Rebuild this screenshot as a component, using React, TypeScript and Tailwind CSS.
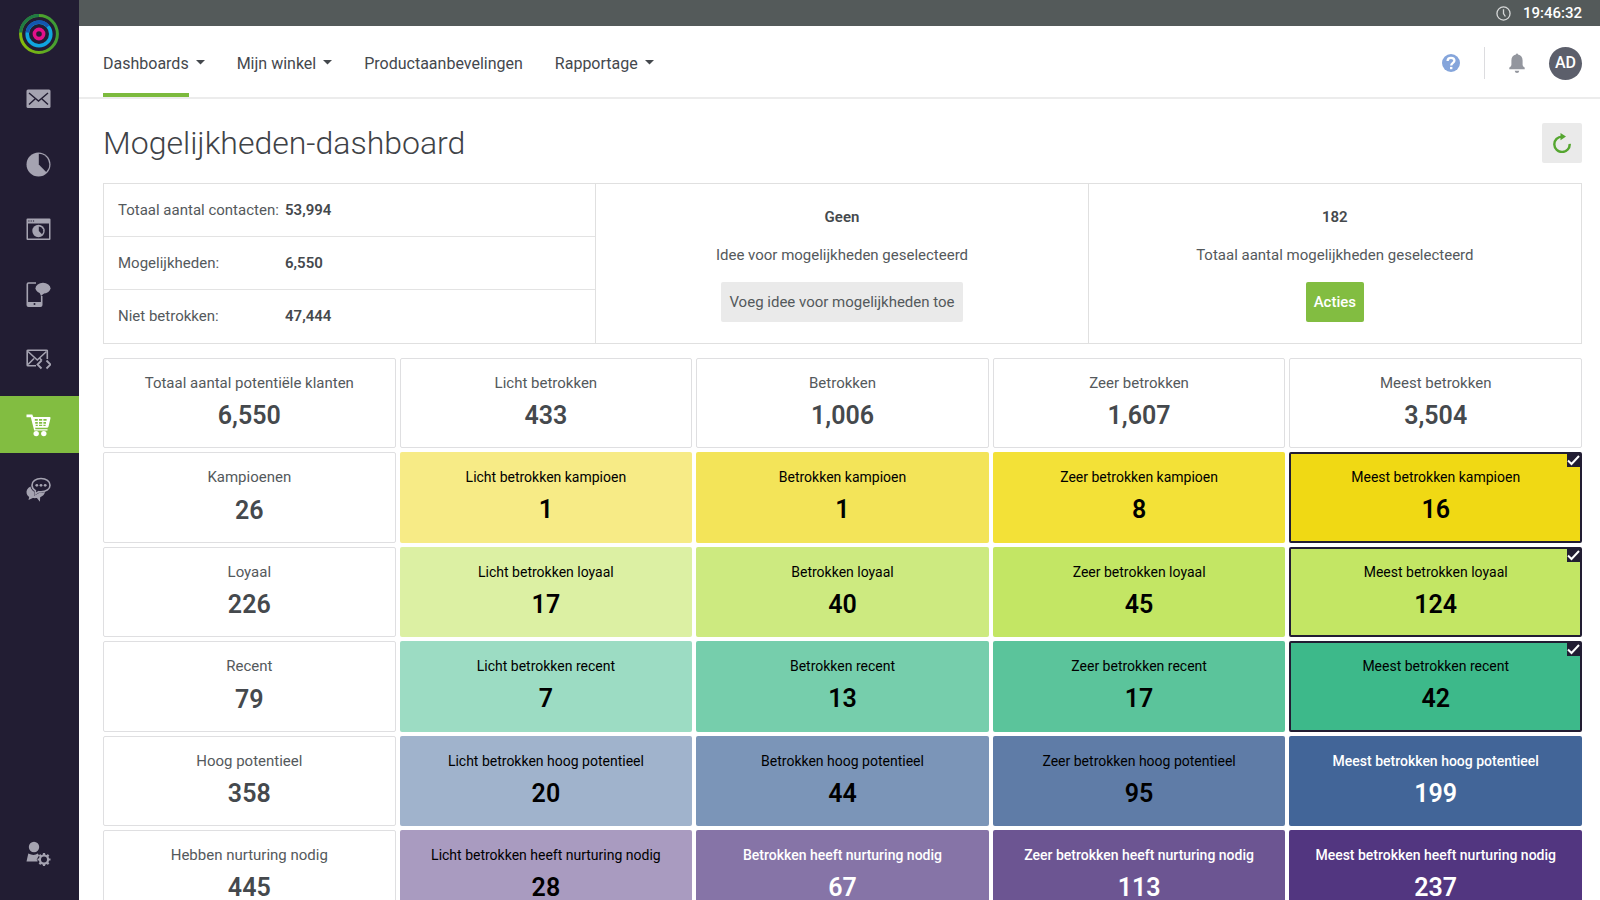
import { useState, type ReactNode } from 'react';

const navItems = [
  { label: 'Dashboards', menu: true, active: true },
  { label: 'Mijn winkel', menu: true, active: false },
  { label: 'Productaanbevelingen', menu: false, active: false },
  { label: 'Rapportage', menu: true, active: false },
];

const contacts = [
  { label: 'Totaal aantal contacten:', value: '53,994' },
  { label: 'Mogelijkheden:', value: '6,550' },
  { label: 'Niet betrokken:', value: '47,444' },
];

const totals = [
  { label: 'Totaal aantal potentiële klanten', value: '6,550' },
  { label: 'Licht betrokken', value: '433' },
  { label: 'Betrokken', value: '1,006' },
  { label: 'Zeer betrokken', value: '1,607' },
  { label: 'Meest betrokken', value: '3,504' },
];

const segments = [
  {
    label: 'Kampioenen',
    value: '26',
    cells: [
      { label: 'Licht betrokken kampioen', value: '1', color: 'bg-[#f7eb86] text-black' },
      { label: 'Betrokken kampioen', value: '1', color: 'bg-[#f3e459] text-black' },
      { label: 'Zeer betrokken kampioen', value: '8', color: 'bg-[#f3e137] text-black' },
      { label: 'Meest betrokken kampioen', value: '16', color: 'bg-[#f0d914] text-black' },
    ],
  },
  {
    label: 'Loyaal',
    value: '226',
    cells: [
      { label: 'Licht betrokken loyaal', value: '17', color: 'bg-[#dcf0a3] text-black' },
      { label: 'Betrokken loyaal', value: '40', color: 'bg-[#cdea80] text-black' },
      { label: 'Zeer betrokken loyaal', value: '45', color: 'bg-[#c3e664] text-black' },
      { label: 'Meest betrokken loyaal', value: '124', color: 'bg-[#c3e664] text-black' },
    ],
  },
  {
    label: 'Recent',
    value: '79',
    cells: [
      { label: 'Licht betrokken recent', value: '7', color: 'bg-[#9cdcc3] text-black' },
      { label: 'Betrokken recent', value: '13', color: 'bg-[#76ceac] text-black' },
      { label: 'Zeer betrokken recent', value: '17', color: 'bg-[#5bc49b] text-black' },
      { label: 'Meest betrokken recent', value: '42', color: 'bg-[#3db98a] text-black' },
    ],
  },
  {
    label: 'Hoog potentieel',
    value: '358',
    cells: [
      { label: 'Licht betrokken hoog potentieel', value: '20', color: 'bg-[#a0b3cc] text-black' },
      { label: 'Betrokken hoog potentieel', value: '44', color: 'bg-[#7b95b8] text-black' },
      { label: 'Zeer betrokken hoog potentieel', value: '95', color: 'bg-[#5f7ca7] text-black' },
      { label: 'Meest betrokken hoog potentieel', value: '199', color: 'bg-[#426598] text-white font-medium' },
    ],
  },
  {
    label: 'Hebben nurturing nodig',
    value: '445',
    cells: [
      { label: 'Licht betrokken heeft nurturing nodig', value: '28', color: 'bg-[#a99bc0] text-black' },
      { label: 'Betrokken heeft nurturing nodig', value: '67', color: 'bg-[#8674a7] text-white font-medium' },
      { label: 'Zeer betrokken heeft nurturing nodig', value: '113', color: 'bg-[#6c5592] text-white font-medium' },
      { label: 'Meest betrokken heeft nurturing nodig', value: '237', color: 'bg-[#523680] text-white font-medium' },
    ],
  },
];

function Icon({ children }: { children: ReactNode }) {
  return (
    <svg viewBox="0 0 25 25" className="size-[25px]" fill="none" aria-hidden="true">
      {children}
    </svg>
  );
}

function Logo() {
  return (
    <svg viewBox="0 0 40 40" className="size-10" fill="none" aria-hidden="true">
      <defs>
        <linearGradient id="ring-green" x1="0" y1="0.6" x2="0.9" y2="0.3">
          <stop offset="0" stopColor="#86bc0c" />
          <stop offset="1" stopColor="#3f9c35" />
        </linearGradient>
      </defs>
      <circle cx="20" cy="20" r="18.4" stroke="url(#ring-green)" strokeWidth="3" />
      <path d="M1.6 18.5A18.4 18.4 0 0 1 20 1.6" stroke="#1f7a45" strokeWidth="3" />
      <circle cx="20" cy="20" r="11.8" stroke="#0fa6df" strokeWidth="3.6" />
      <path d="M8.3 18.5A11.8 11.8 0 0 1 29 12.3" stroke="#1456b0" strokeWidth="3.6" />
      <circle cx="20" cy="20" r="4.6" stroke="#e3108a" strokeWidth="3.6" />
    </svg>
  );
}

const sidebarItems = [
  {
    name: 'E-mail',
    icon: (
      <Icon>
        <rect x="0.5" y="2.5" width="24" height="18.5" rx="1.5" fill="currentColor" />
        <path d="M3 6 12.500 14 22 6M3 17.500l6-5.500M22 17.500l-6-5.500" stroke="#221d33" strokeWidth="1.4" />
      </Icon>
    ),
  },
  {
    name: 'Analyse',
    icon: (
      <Icon>
        <circle cx="12.5" cy="12.5" r="12" fill="currentColor" />
        <path d="M12.8 1.8A10.8 10.8 0 0 1 20.2 20L12.8 12.5Z" fill="#221d33" />
      </Icon>
    ),
  },
  {
    name: 'Webkanaal',
    icon: (
      <Icon>
        <path d="M.5 2.500a1 1 0 0 1 1-1h22a1 1 0 0 1 1 1V22a1 1 0 0 1-1 1h-22a1 1 0 0 1-1-1Z" fill="currentColor" />
        <path d="M2 6.500h21v15H2Z" fill="#221d33" />
        <path d="M2.300 3.400h1.200v1.200H2.300ZM4.600 3.400h1.200v1.200H4.600ZM6.900 3.400h1.200v1.200H6.900Z" fill="#221d33" />
        <circle cx="12.5" cy="14" r="6.2" fill="currentColor" />
        <path d="M12.800 9.500A4.600 4.600 0 0 1 16 17.300L12.800 14Z" fill="#221d33" />
      </Icon>
    ),
  },
  {
    name: 'Mobiel',
    icon: (
      <Icon>
        <path d="M10 1H2.500A1.200 1.200 0 0 0 1.300 2.200V23a1.200 1.200 0 0 0 1.200 1.200h12A1.200 1.200 0 0 0 15.700 23v-9" stroke="currentColor" strokeWidth="1.6" />
        <path d="M1.500 20h14v4h-14Z" fill="currentColor" />
        <circle cx="8.5" cy="22" r="1" fill="#221d33" />
        <ellipse cx="17" cy="6.2" rx="7.5" ry="5.4" fill="currentColor" />
        <path d="M13.500 10.500 15 14l4-3.500Z" fill="currentColor" />
      </Icon>
    ),
  },
  {
    name: 'Transactionele e-mail',
    icon: (
      <Icon>
        <path d="M10 18.700H2a.8.8 0 0 1-.8-.8V4a.8.8 0 0 1 .8-.8h18.500a.8.8 0 0 1 .8.8v8" stroke="currentColor" strokeWidth="1.6" />
        <path d="m2 4.500 9.300 8.500L20.500 4.500M2 17.500l6-6M14 11.500l2 2" stroke="currentColor" strokeWidth="1.6" />
        <path d="m15.500 13.500-4 4 4 4M20.500 13.500l4 4-4 4" stroke="currentColor" strokeWidth="1.8" />
      </Icon>
    ),
  },
  {
    name: 'Winkel',
    active: true,
    icon: (
      <Icon>
        <path d="M.5 2.500h5.800l1 2.500h16.200q1.300 0 1 1.200l-2 8.300q-.3 1.200-1.500 1.200H9l.5 1.600h12v1.300H8.200L4.800 5.300H.5Z" fill="currentColor" />
        <path
          d="M8.800 7h3v1.800h-3ZM13 7h3.200v1.800H13ZM17.400 7h3.200v1.800h-3.200ZM9.200 9.900h2.600v1.800H9.200ZM13 9.900h3.200v1.800H13ZM17.400 9.900H20v1.800h-2.600ZM9.700 12.800h2.100v1.300H9.700ZM13 12.800h3.200v1.300H13ZM17.400 12.800h2.200v1.300h-2.200Z"
          fill="#82bd41"
        />
        <circle cx="10.2" cy="21.6" r="2.7" fill="currentColor" />
        <circle cx="17.8" cy="21.6" r="2.7" fill="currentColor" />
      </Icon>
    ),
  },
  {
    name: 'Conversaties',
    icon: (
      <Icon>
        <path d="M4.500 9.500C1.500 11 0 13.500.6 16.200c.4 1.700 1.400 2.900 2.600 3.700L2.500 23l4.300-1.900c1.300.2 2.800.2 4.100 0l3 3.700.3-4.500c2.500-.9 4.300-2.800 4.800-5.200-2 .8-4 1-6 .9l-5 2.700.2-4C6.200 13.600 5 11.800 4.500 9.500Z" fill="currentColor" />
        <path d="M15 1.500c5.200 0 9 2.900 9 6.700s-3.800 6.700-9 6.700c-.8 0-1.600-.1-2.300-.2l-3.500 2.200.2-3.300C7.300 12.400 6 10.400 6 8.200c0-3.800 3.800-6.700 9-6.700Z" fill="#221d33" stroke="currentColor" strokeWidth="1.6" />
        <circle cx="10.8" cy="8.3" r="1.4" fill="currentColor" />
        <circle cx="15" cy="8.3" r="1.4" fill="currentColor" />
        <circle cx="19.2" cy="8.3" r="1.4" fill="currentColor" />
      </Icon>
    ),
  },
];

function Sidebar() {
  return (
    <aside className="flex w-[79px] shrink-0 flex-col items-center bg-[#221d33] pt-[14px] pb-[18px] text-[#a5a3b1]">
      <a href="#home" aria-label="Home" className="pr-0.5">
        <Logo />
      </a>
      <nav className="mt-[17px] flex w-full flex-col gap-2">
        {sidebarItems.map((item) => (
          <a
            key={item.name}
            href="#"
            aria-label={item.name}
            className={`flex h-[57px] items-center justify-center pr-[3px] ${item.active ? 'bg-[#82bd41] text-white' : ''}`}
          >
            {item.icon}
          </a>
        ))}
      </nav>
      <a href="#beheer" aria-label="Beheer" className="mt-auto flex h-[57px] w-full items-center justify-center pr-[3px]">
        <Icon>
          <circle cx="8" cy="6" r="5.2" fill="currentColor" />
          <path d="M2.300 12.600q5.700 2.800 9.500 0l1.300 1.900-2.400 3.700 1 2.300H.5Z" fill="currentColor" />
          <circle cx="18" cy="18.5" r="4.1" stroke="currentColor" strokeWidth="2.2" />
          <path d="M18 12v2.500M18 22.500V25M11.500 18.500H14M22 18.500h2.500M13.400 13.900l1.800 1.800M20.800 21.300l1.800 1.800M13.400 23.100l1.800-1.800M20.800 15.700l1.800-1.800" stroke="currentColor" strokeWidth="2.2" />
        </Icon>
      </a>
    </aside>
  );
}

function TopBar() {
  return (
    <div className="flex h-[26px] shrink-0 items-center justify-end gap-3 bg-[#545a5a] pr-[18px] text-[15px] leading-6 font-medium text-white">
      <svg viewBox="0 0 16 16" className="size-[15px]" fill="none" stroke="#d5d7d7" aria-hidden="true">
        <circle cx="8" cy="8" r="7" strokeWidth="1.4" />
        <path d="M8 3.500V8l2 3.200" strokeWidth="1.4" />
      </svg>
      <time>19:46:32</time>
    </div>
  );
}

function Header() {
  return (
    <header className="flex h-[73px] shrink-0 items-stretch justify-between border-b-2 border-[#ececec] pr-[18px] pl-6">
      <nav className="flex gap-8">
        {navItems.map((item) => (
          <a key={item.label} href="#" className="flex gap-[7px] text-base text-[#44484d]">
            <span
              className={`flex items-center border-b-4 pt-2 ${item.active ? 'border-[#7cba3d]' : 'border-transparent'}`}
            >
              {item.label}
            </span>
            {item.menu && (
              <svg viewBox="0 0 9 5" className="mt-[2px] h-[5px] w-[9px] self-center" fill="currentColor" aria-hidden="true">
                <path d="M0 0h9L4.500 4.500Z" />
              </svg>
            )}
          </a>
        ))}
      </nav>
      <div className="flex items-center pt-[3px]">
        <button type="button" aria-label="Help">
          <svg viewBox="0 0 18 18" className="size-[18px]" fill="none" aria-hidden="true">
            <circle cx="9" cy="9" r="9" fill="#85a5db" />
            <path d="M5.600 7C5.600 5 7.100 3.900 9 3.900s3.400 1.100 3.400 2.800c0 2.100-3.200 2.200-3.200 4.700" stroke="white" strokeWidth="2.3" />
            <path d="M8 12.900h2.400v2.300H8Z" fill="white" />
          </svg>
        </button>
        <span className="ml-6 h-8 w-px bg-[#dcdcdf]" />
        <button type="button" aria-label="Meldingen" className="ml-6">
          <svg viewBox="0 0 16 20" className="h-5 w-4" fill="#93969e" aria-hidden="true">
            <path d="M7 1.500a1 1 0 0 1 2 0c3 .6 4.600 2.800 4.600 6v4.300c0 1.200.8 2 2.100 2.800v1.600H.3v-1.600c1.300-.8 2.100-1.600 2.100-2.800V7.500c0-3.200 1.600-5.400 4.600-6Z" />
            <path d="M5.700 17.800h4.600Q10 20 8 20t-2.300-2.200Z" />
          </svg>
        </button>
        <button
          type="button"
          className="ml-6 flex size-[33px] items-center justify-center rounded-full bg-[#5c5f6b] text-base font-medium text-white"
        >
          AD
        </button>
      </div>
    </header>
  );
}

function Summary() {
  return (
    <section className="mt-5 grid grid-cols-3 divide-x divide-[#e0e0e0] border border-[#e0e0e0] text-[15px] text-[#54595c]">
      <dl className="divide-y divide-[#e3e3e3]">
        {contacts.map((row) => (
          <div key={row.label} className="flex h-[53px] items-center gap-[5px] pl-[14px]">
            <dt className="w-[162px] whitespace-nowrap">{row.label}</dt>
            <dd className="font-semibold text-[#45494d]">{row.value}</dd>
          </div>
        ))}
      </dl>
      <div className="flex flex-col items-center pt-[21px]">
        <strong className="leading-6 font-semibold text-[#45494d]">Geen</strong>
        <p className="mt-[14px] leading-6">Idee voor mogelijkheden geselecteerd</p>
        <button type="button" className="mt-[15px] h-10 rounded-xs bg-[#eaeaea] px-2">
          Voeg idee voor mogelijkheden toe
        </button>
      </div>
      <div className="flex flex-col items-center pt-[21px]">
        <strong className="leading-6 font-semibold text-[#45494d]">182</strong>
        <p className="mt-[14px] leading-6">Totaal aantal mogelijkheden geselecteerd</p>
        <button type="button" className="mt-[15px] h-10 rounded-xs bg-[#82bd41] px-2 font-medium text-white">
          Acties
        </button>
      </div>
    </section>
  );
}

function TotalCard({ label, value }: { label: string; value: string }) {
  return (
    <div className="flex flex-col items-center rounded-xs border border-[#dfdfe1] pt-3 pb-[19px] text-[#54595c]">
      <span className="text-[15px] leading-relaxed">{label}</span>
      <span className="mt-[9px] text-[25px] leading-6 font-semibold text-[#45494d]">{value}</span>
    </div>
  );
}

interface SegmentCellProps {
  label: string;
  value: string;
  color: string;
  checked: boolean;
  onToggle: () => void;
}

function SegmentCell({ label, value, color, checked, onToggle }: SegmentCellProps) {
  return (
    <label
      className={`relative flex cursor-pointer flex-col items-center rounded-xs border-2 pt-[11px] ${color} ${
        checked ? 'border-[#221d33]' : 'border-transparent'
      }`}
    >
      <input
        type="checkbox"
        checked={checked}
        onChange={onToggle}
        className="absolute top-0 right-0 size-[13px] appearance-none checked:bg-[#221d33]"
      />
      {checked && (
        <svg viewBox="0 0 13 13" className="pointer-events-none absolute top-0 right-0 size-[13px]" fill="none" aria-hidden="true">
          <path d="M1 6.500 4.500 10 12 2" stroke="white" strokeWidth="2" />
        </svg>
      )}
      <span className="text-sm leading-6">{label}</span>
      <span className="mt-[9px] text-[25px] leading-6 font-semibold">{value}</span>
    </label>
  );
}

export default function App() {
  const [selected, setSelected] = useState([
    'Meest betrokken kampioen',
    'Meest betrokken loyaal',
    'Meest betrokken recent',
  ]);

  const toggle = (label: string) => {
    setSelected((prev) => (prev.includes(label) ? prev.filter((l) => l !== label) : [...prev, label]));
  };

  return (
    <div className="flex h-screen overflow-hidden bg-white font-[Roboto,sans-serif]">
      <Sidebar />
      <div className="flex min-w-0 flex-1 flex-col">
        <TopBar />
        <Header />
        <main className="min-h-0 flex-1 overflow-y-auto pt-6 pr-[18px] pb-6 pl-6 [scrollbar-width:none]">
          <div className="flex items-center justify-between">
            <h1 className="text-[32px] leading-10 font-light text-[#3f4347]">Mogelijkheden-dashboard</h1>
            <button type="button" aria-label="Vernieuwen" className="flex size-10 items-center justify-center rounded-xs bg-[#eaeaea]">
              <svg viewBox="0 0 20 20" className="size-5" fill="none" aria-hidden="true">
                <path d="M17.700 10.800A7.700 7.700 0 1 1 10 3.600" stroke="#55a630" strokeWidth="2.4" />
                <path d="M8.500 0v7.200L14 3.600Z" fill="#55a630" />
              </svg>
            </button>
          </div>
          <Summary />
          <section className="mt-[14px] grid grid-cols-5 gap-1">
            {totals.map((total) => (
              <TotalCard key={total.label} label={total.label} value={total.value} />
            ))}
            {segments.map((segment) => (
              <div key={segment.label} className="contents">
                <TotalCard label={segment.label} value={segment.value} />
                {segment.cells.map((cell) => (
                  <SegmentCell
                    key={cell.label}
                    label={cell.label}
                    value={cell.value}
                    color={cell.color}
                    checked={selected.includes(cell.label)}
                    onToggle={() => toggle(cell.label)}
                  />
                ))}
              </div>
            ))}
          </section>
        </main>
      </div>
    </div>
  );
}
